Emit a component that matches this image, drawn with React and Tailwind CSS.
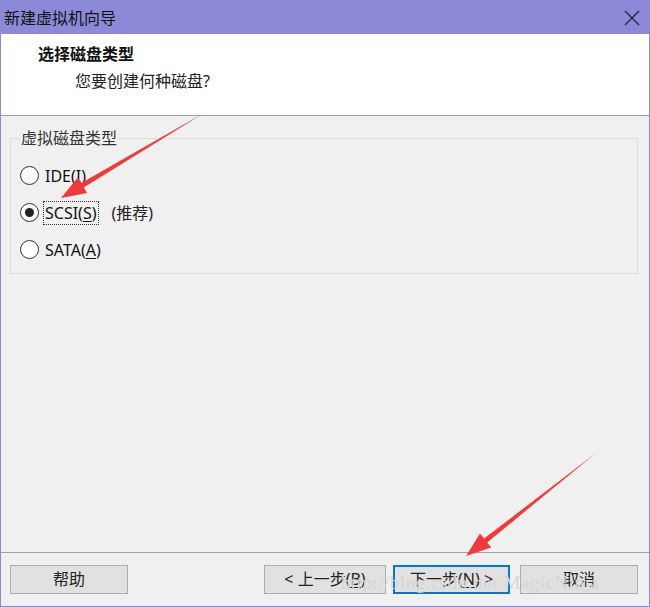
import React from "react";

const cjk = { fontFamily: '"Noto Sans", "Noto Sans CJK SC", sans-serif' };

const Radio = ({ checked, label, mnemonic, focus, extra }) => {
  const idx = label.lastIndexOf("(");
  return (
    <div className="flex items-center h-[37px]">
      <span className="w-[19px] h-[19px] rounded-full border border-[#333] bg-white flex items-center justify-center">
        {checked && <span className="w-[9px] h-[9px] rounded-full bg-[#222]" />}
      </span>
      <span
        className={
          "ml-[5px] px-[1px] leading-[22px] text-[16px] text-[#111] " +
          (focus ? "outline outline-1 outline-dotted outline-[#333]" : "")
        }
      >
        {label.slice(0, idx)}(<span className="underline underline-offset-2">{mnemonic}</span>)
      </span>
      {extra && <span className="ml-[14px] text-[16px] text-[#222]">{extra}</span>}
    </div>
  );
};

const Btn = ({ children, primary, className = "" }) => (
  <button
    className={
      "h-[29px] bg-[#e1e1e1] text-[16px] text-[#222] flex items-center justify-center " +
      (primary ? "border-2 border-[#0078d7] " : "border border-[#adadad] ") +
      className
    }
  >
    {children}
  </button>
);

export default function App() {
  return (
    <div
      className="relative w-[650px] h-[607px] border border-[#8d89d9] bg-[#f0f0f0] flex flex-col overflow-hidden"
      style={cjk}
    >
      {/* 标题栏 */}
      <div className="h-[33px] bg-[#8d89d9] flex items-center justify-between pl-[3px] pr-[9px] shrink-0">
        <span className="text-[16px] text-[#111]">新建虚拟机向导</span>
        <svg width="16" height="16" viewBox="0 0 16 16">
          <path d="M1 1 L15 15 M15 1 L1 15" stroke="#222" strokeWidth="1.2" />
        </svg>
      </div>

      {/* 头部 */}
      <div className="h-[82px] bg-white border-b border-[#a0a0a0] shrink-0 pt-[9px] pl-[37px]">
        <div className="text-[16px] font-bold text-[#111] leading-[22px]">选择磁盘类型</div>
        <div className="text-[16px] text-[#222] leading-[22px] mt-[5px] pl-[37px]">您要创建何种磁盘?</div>
      </div>

      {/* 内容 */}
      <div className="pl-[9px] pt-[12px] pr-[11px]">
        <fieldset className="border border-[#dcdcdc] h-[146px] pl-[9px] pt-[9px]">
          <legend className="ml-0 px-[1px] text-[16px] text-[#333] leading-[20px]">虚拟磁盘类型</legend>
          <Radio label="IDE(I)" mnemonic="I" />
          <Radio label="SCSI(S)" mnemonic="S" checked focus extra="(推荐)" />
          <Radio label="SATA(A)" mnemonic="A" />
        </fieldset>
      </div>

      {/* 底部 */}
      <div className="mt-auto border-t border-[#a0a0a0] h-[54px] flex items-center pl-[9px] pr-[11px] pb-[1px]">
        <Btn className="w-[118px]">帮助</Btn>
        <div className="ml-auto flex gap-[7px]">
          <Btn className="w-[122px]">&lt; 上一步(<span className="underline underline-offset-2">B</span>)</Btn>
          <Btn primary className="w-[117px]">下一步(<span className="underline underline-offset-2">N</span>) &gt;</Btn>
        </div>
        <Btn className="w-[118px] ml-[10px]">取消</Btn>
      </div>

      {/* 水印 */}
      <div
        className="absolute left-[340px] top-[568px] text-[19px] text-[#d6d6d6] tracking-[0.5px] pointer-events-none"
        style={{ fontFamily: '"Liberation Serif", serif' }}
      >
        http://blog.csdn.net/MagicNinja
      </div>

      {/* 红色箭头 */}
      <svg className="absolute left-0 top-0 pointer-events-none" width="650" height="607">
        <polygon
          points="203,112 82.8,186.4 86.1,191.9 60,197 76.9,176.5 80.2,182.0"
          fill="#f03a3a"
        />
        <polygon
          points="595,452 486.2,541.5 490.2,546.5 465,555 479.0,532.5 483.1,537.5"
          fill="#f03a3a"
        />
      </svg>
    </div>
  );
}
